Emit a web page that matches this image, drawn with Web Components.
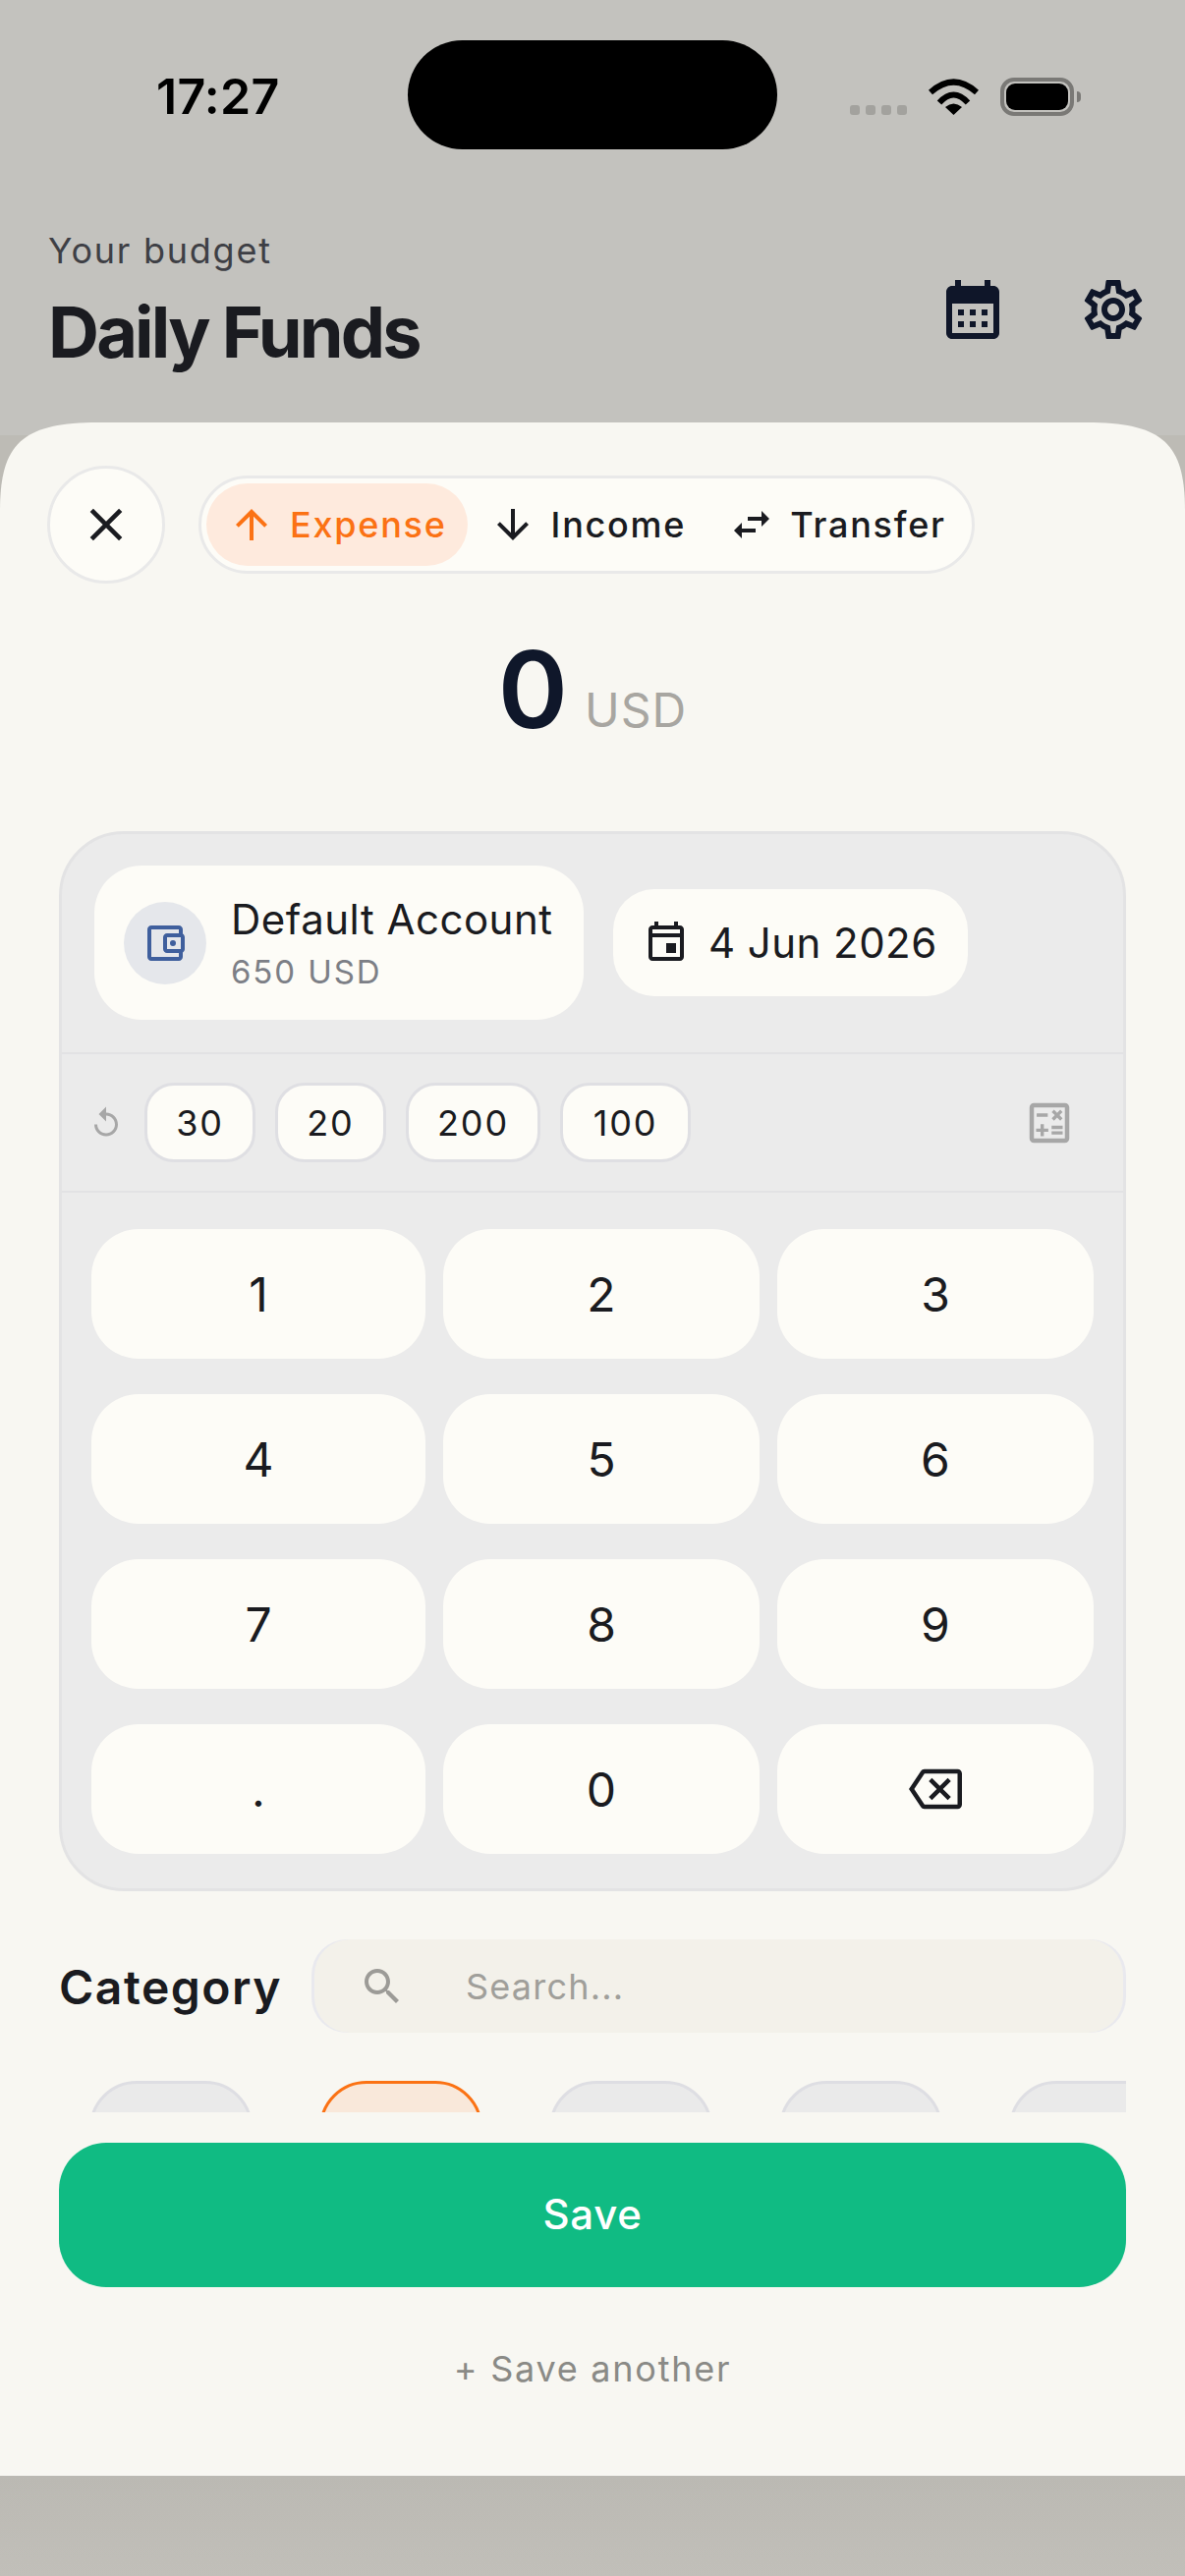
<!DOCTYPE html>
<html lang="en"><head><meta charset="utf-8"><title>Daily Funds</title>
<style>
html,body{margin:0;padding:0}
body{width:1206px;height:2622px;overflow:hidden;position:relative;font-family:Inter,"Liberation Sans",sans-serif;color:#1A1B20;
background:linear-gradient(to bottom,#BDBBB5 0,#BDBBB5 2520px,#BBB9B3 2520px,#C1BFB9 2622px)}
</style></head><body>
<app-top></app-top>
<entry-sheet>
  <sheet-top></sheet-top>
  <amount-display value="0" currency="USD"></amount-display>
  <entry-panel></entry-panel>
  <category-row></category-row>
  <category-strip></category-strip>
  <save-actions></save-actions>
</entry-sheet>
<script>
const P={
 up:'M4 12l1.41 1.41L11 7.83V20h2V7.83l5.58 5.59L20 12l-8-8-8 8z',
 down:'M20 12l-1.41-1.41L13 16.17V4h-2v12.17l-5.58-5.59L4 12l8 8 8-8z',
 swap:'M6.99 11L3 15l3.99 4v-3H14v-2H6.99v-3zM21 9l-3.99-4v3H10v2h7.01v3L21 9z',
 close:'M19 6.41L17.59 5 12 10.59 6.41 5 5 6.41 10.59 12 5 17.59 6.41 19 12 13.41 17.59 19 19 17.59 13.41 12z',
 event:'M6 1h2v2h8V1h2v2h1c1.1 0 2 .9 2 2v14c0 1.1-.9 2-2 2H5c-1.1 0-2-.9-2-2V5c0-1.100.9-2 2-2h1zM5 5v2h14V5zM5 9v10h14V9zM12 12h5v5h-5z',
 month:'M19 4h-1V2h-2v2H8V2H6v2H5c-1.1 0-2 .9-2 2v14c0 1.1.9 2 2 2h14c1.1 0 2-.9 2-2V6c0-1.1-.9-2-2-2zm0 16H5V10h14v10zM9 14H7v-2h2v2zm4 0h-2v-2h2v2zm4 0h-2v-2h2v2zm-8 4H7v-2h2v2zm4 0h-2v-2h2v2zm4 0h-2v-2h2v2z',
 gear:'M19.43 12.98c.04-.32.07-.64.07-.98 0-.34-.03-.66-.07-.98l2.11-1.65c.19-.15.24-.42.12-.64l-2-3.46c-.09-.16-.26-.25-.44-.25-.06 0-.12.01-.17.03l-2.49 1c-.52-.4-1.08-.73-1.69-.98l-.38-2.65C14.46 2.18 14.25 2 14 2h-4c-.25 0-.46.18-.49.42l-.38 2.65c-.61.25-1.17.59-1.69.98l-2.49-1c-.06-.02-.12-.03-.18-.03-.17 0-.34.09-.43.25l-2 3.46c-.13.22-.07.49.12.64l2.11 1.65c-.04.32-.07.65-.07.98 0 .33.03.66.07.98l-2.11 1.65c-.19.15-.24.42-.12.64l2 3.46c.09.16.26.25.44.25.06 0 .12-.01.17-.03l2.49-1c.52.4 1.08.73 1.69.98l.38 2.65c.03.24.24.42.49.42h4c.25 0 .46-.18.49-.42l.38-2.65c.61-.25 1.17-.59 1.69-.98l2.49 1c.06.02.12.03.18.03.17 0 .34-.09.43-.25l2-3.46c.12-.22.07-.49-.12-.64l-2.11-1.65zm-1.98-1.71c.04.31.05.52.05.73 0 .21-.02.43-.05.73l-.14 1.13.89.7 1.08.84-.7 1.21-1.27-.51-1.04-.42-.9.68c-.43.32-.84.56-1.25.73l-1.06.43-.16 1.13-.2 1.35h-1.4l-.19-1.35-.16-1.13-1.06-.43c-.43-.18-.83-.41-1.23-.71l-.91-.7-1.06.43-1.27.51-.7-1.21 1.08-.84.89-.7-.14-1.13c-.03-.31-.05-.54-.05-.74s.02-.43.05-.73l.14-1.13-.89-.7-1.08-.84.7-1.21 1.27.51 1.04.42.9-.68c.43-.32.84-.56 1.25-.73l1.06-.43.16-1.13.2-1.35h1.39l.19 1.35.16 1.13 1.06.43c.43.18.83.41 1.23.71l.91.7 1.06-.43 1.27-.51.7 1.21-1.07.85-.89.7.14 1.13zM12 8c-2.21 0-4 1.79-4 4s1.79 4 4 4 4-1.79 4-4-1.79-4-4-4zm0 6c-1.1 0-2-.9-2-2s.9-2 2-2 2 .9 2 2-.9 2-2 2z',
 wallet:'M21 7.28V5c0-1.1-.9-2-2-2H5c-1.11 0-2 .9-2 2v14c0 1.1.89 2 2 2h14c1.1 0 2-.9 2-2v-2.28c.59-.35 1-.98 1-1.72V9c0-.74-.41-1.37-1-1.72zM20 9v6h-7V9h7zM5 19V5h14v2h-6c-1.1 0-2 .9-2 2v6c0 1.1.9 2 2 2h6v2H5z M16 10.5a1.5 1.5 0 1 0 0 3a1.5 1.5 0 1 0 0-3z',
 replay:'M12 5V1L7 6l5 5V7c3.31 0 6 2.69 6 6s-2.69 6-6 6-6-2.69-6-6H4c0 4.42 3.58 8 8 8s8-3.58 8-8-3.58-8-8-8z',
 calc:'M19 3H5c-1.1 0-2 .9-2 2v14c0 1.1.9 2 2 2h14c1.1 0 2-.9 2-2V5c0-1.1-.9-2-2-2zm0 16H5V5h14v14zM6.25 7.72h5v1.5h-5zM13 15.75h5v1.5h-5zM13 13.25h5v1.5h-5zM8 18h1.5v-2h2v-1.5h-2v-2H8v2H6V16h2zM14.09 10.95l1.41-1.41 1.41 1.41 1.06-1.06-1.41-1.42 1.41-1.41L16.91 6 15.5 7.41 14.09 6l-1.06 1.06 1.41 1.41-1.41 1.42z',
 back:'M22 3H7c-.69 0-1.23.35-1.59.88L0 12l5.41 8.11c.36.53.9.89 1.59.89h15c1.1 0 2-.9 2-2V5c0-1.1-.9-2-2-2zm0 16H7.07L2.4 12l4.66-7H22v14zm-11.59-2L14 13.41 17.59 17 19 15.59 15.41 12 19 8.41 17.59 7 14 10.59 10.41 7 9 8.41 12.59 12 9 15.59z',
 search:'M15.5 14h-.79l-.28-.27C15.41 12.59 16 11.11 16 9.5 16 5.91 13.09 3 9.5 3S3 5.91 3 9.5 5.91 16 9.5 16c1.61 0 3.09-.59 4.23-1.57l.27.28v.79l5 4.99L20.49 19l-4.99-5zm-6 0C7.01 14 5 11.99 5 9.5S7.01 5 9.5 5 14 7.01 14 9.5 11.99 14 9.5 14z'
};
class Base extends HTMLElement{
  constructor(){super();this.attachShadow({mode:'open'})}
  connectedCallback(){if(!this._d){this._d=1;this.shadowRoot.innerHTML=this.render()}}
}
const def=(n,r)=>customElements.define(n,class extends Base{render(){return r.call(this)}});
def('ui-icon',function(){const s=this.getAttribute('size')||48,c=this.getAttribute('color')||'currentColor';
 return `<style>:host{display:block;flex:none;width:${s}px;height:${s}px}svg{display:block;width:100%;height:100%}</style><svg viewBox="0 0 24 24"><path fill="${c}" fill-rule="evenodd" d="${P[this.getAttribute('name')]}"/></svg>`});
def('status-bar',()=>`<style>
:host{display:flex;height:152px;box-sizing:border-box;padding-top:41px;font-family:Inter,sans-serif}
.l{width:415px;box-sizing:border-box;padding:27px 0 0 159px;font-size:50px;font-weight:600;line-height:60px;color:#000;letter-spacing:.3px}
.i{width:376px;height:111px;border-radius:56px;background:#000}
.r{display:flex;align-items:flex-end;height:76px;padding-left:74px}
.d{display:flex;gap:6px}.d b{width:10px;height:10px;border-radius:3px;background:#A3A29E;display:block}
svg.w{display:block;margin-left:22px;width:51px;height:37px}
.b{margin-left:22px;width:75px;height:39px;margin-bottom:-1px;box-sizing:border-box;border:4px solid #7A7976;border-radius:14px;padding:2px;position:relative}
.b i{display:block;height:100%;background:#000;border-radius:9px}
.b u{position:absolute;right:-11px;top:10px;width:4px;height:11px;border-radius:0 4px 4px 0;background:#7A7976}
</style><div class="l">17:27</div><div class="i"></div><div class="r"><div class="d"><b></b><b></b><b></b><b></b></div>
<svg class="w" viewBox="0 0 51 37"><path d="M2 14Q25.5-7 49 14M11 24.500Q25.500 8.500 40 24.500" fill="none" stroke="#000" stroke-width="6"/><path d="M25.500 37L17 29Q25.500 22 34 29Z" fill="#000"/></svg>
<div class="b"><i></i><u></u></div></div>`);
def('app-top',()=>`<style>
:host{display:block;height:443px;box-sizing:border-box;background:#C3C2BE}
.h{display:flex;justify-content:space-between;padding:81px 37px 0 49px}
.s{font-size:36px;line-height:44px;color:#3E3F45;letter-spacing:1.75px}
.t{font-size:72px;font-weight:700;line-height:86px;color:#1A1B20;letter-spacing:-2.85px;margin-top:18px}
.a{display:flex;gap:71px;padding-top:46px}
</style><status-bar></status-bar><div class="h"><div><div class="s">Your budget</div><div class="t">Daily Funds</div></div>
<div class="a"><ui-icon name="month" size="72" color="#0F1629"></ui-icon><ui-icon name="gear" size="72" color="#0F1629"></ui-icon></div></div>`);
def('entry-sheet',()=>`<style>
:host{display:block;position:absolute;left:0;top:430px;width:1206px;height:2090px;box-sizing:border-box;background:#F8F7F2;clip-path:path('M0 90C0 22 22 0 100 0H1106C1184 0 1206 22 1206 90V2090H0Z');padding-top:44px;font-family:Inter,sans-serif}
</style><slot></slot>`);
def('seg-tab',function(){const a=this.hasAttribute('active');return `<style>
:host{display:flex;align-items:center;gap:15px;height:84px;padding:0 21px 0 22px;border-radius:42px;font-size:36px;font-weight:500;letter-spacing:1.75px;color:${a?'#FB7214':'#1A1B20'};background:${a?'#FEEADD':'transparent'}}
</style><ui-icon name="${this.getAttribute('icon')}" size="48"></ui-icon><slot></slot>`});
def('sheet-top',()=>`<style>
:host{display:flex;align-items:center;gap:34px;padding-left:48px}
.c{width:120px;height:120px;box-sizing:border-box;border:3px solid #E9E9E9;border-radius:50%;background:#FDFCF7;display:flex;align-items:center;justify-content:center;color:#1A1B20}
.s{display:flex;height:100px;box-sizing:border-box;align-items:center;border:3px solid #E9E9E9;border-radius:50px;background:#FDFCF7;padding:0 5px}
</style><div class="c"><ui-icon name="close" size="56"></ui-icon></div>
<div class="s"><seg-tab icon="up" active>Expense</seg-tab><seg-tab icon="down">Income</seg-tab><seg-tab icon="swap">Transfer</seg-tab></div>`);
def('amount-display',function(){return `<style>
:host{display:flex;justify-content:center;align-items:baseline;gap:17px;margin:54px 0 90px;height:108px;line-height:108px}
.v{font-size:108px;font-weight:600;color:#0F172A}.c{font-size:48px;color:#A8A6A1;letter-spacing:1px;position:relative;top:-1px}
</style><span class="v">${this.getAttribute('value')}</span><span class="c">${this.getAttribute('currency')}</span>`});
def('account-card',()=>`<style>
:host{display:flex;align-items:center;gap:25px;width:498px;height:157px;box-sizing:border-box;padding-left:30px;border-radius:48px;background:#FDFCF7}
.i{width:84px;height:84px;border-radius:50%;background:#E5E7EB;display:flex;align-items:center;justify-content:center}
.n{font-size:42px;line-height:50px;letter-spacing:.5px;color:#1A1B20}
.b{font-size:33px;line-height:40px;letter-spacing:1.9px;color:#7C7F86;margin-top:8px}
</style><div class="i"><ui-icon name="wallet" size="48" color="#3F5F9D"></ui-icon></div><div><div class="n">Default Account</div><div class="b">650 USD</div></div>`);
def('date-pill',()=>`<style>
:host{display:flex;align-items:center;gap:19px;width:361px;height:109px;box-sizing:border-box;padding-left:30px;border-radius:42px;background:#FDFCF7;font-size:42px;letter-spacing:.45px;color:#1A1B20}
</style><ui-icon name="event" size="48"></ui-icon><span>4 Jun 2026</span>`);
def('quick-chip',function(){const w=this.getAttribute('w');return `<style>
:host{display:flex;align-items:center;justify-content:center;width:${w}px;height:81px;box-sizing:border-box;border:3px solid #DFDFE3;border-radius:30px;background:#FDFCF7;font-size:36px;letter-spacing:1.8px;color:#1A1B20}
</style><slot></slot>`});
def('key-btn',()=>`<style>
:host{display:flex;align-items:center;justify-content:center;border-radius:48px;background:#FDFCF7;font-size:48px;color:#1A1B20}
</style><slot></slot>`);
def('entry-panel',()=>`<style>
:host{display:block;margin:0 60px;height:1079px;box-sizing:border-box;border:3px solid #E3E3E4;border-radius:66px;background:#EBEBEB}
.a{display:flex;align-items:center;gap:30px;height:224px;box-sizing:border-box;padding:33px 33px 34px;border-bottom:2px solid #E2E2E4}
.q{display:flex;align-items:center;gap:20px;height:141px;box-sizing:border-box;padding:0 48px 0 27px;border-bottom:2px solid #E2E2E4}
.q ui-icon:first-child{margin-right:1px}
.q ui-icon:last-child{margin-left:auto}
.k{display:grid;grid-template-columns:340px 322px 322px;grid-auto-rows:132px;column-gap:18px;row-gap:36px;padding:37px 30px 0}
</style><div class="a"><account-card></account-card><date-pill></date-pill></div>
<div class="q"><ui-icon name="replay" size="36" color="#A7A7A7"></ui-icon><quick-chip w="113">30</quick-chip><quick-chip w="113">20</quick-chip><quick-chip w="137">200</quick-chip><quick-chip w="133">100</quick-chip><ui-icon name="calc" size="54" color="#A7A7A7"></ui-icon></div>
<div class="k"><key-btn>1</key-btn><key-btn>2</key-btn><key-btn>3</key-btn><key-btn>4</key-btn><key-btn>5</key-btn><key-btn>6</key-btn><key-btn>7</key-btn><key-btn>8</key-btn><key-btn>9</key-btn><key-btn>.</key-btn><key-btn>0</key-btn><key-btn><ui-icon name="back" size="54"></ui-icon></key-btn></div>`);
def('category-row',()=>`<style>
:host{display:flex;align-items:center;gap:32px;margin:49px 60px 0;height:95px}
.t{flex:none;width:225px;font-size:48px;font-weight:600;letter-spacing:1.5px;color:#1A1B20;position:relative;top:1px}
.s{flex:1;height:95px;border-radius:36px;background:#E9E9EE;overflow:hidden;display:flex}
.i{flex:1;margin:0 3px;border-radius:36px;background:#F3F1EA;display:flex;align-items:center;padding-left:45px;gap:61px;font-size:36px;letter-spacing:1.2px;color:#A09F9A}
</style><div class="t">Category</div><div class="s"><div class="i"><ui-icon name="search" size="48" color="#9C9B97"></ui-icon><span>Search...</span></div></div>`);
def('category-strip',()=>`<style>
:host{display:flex;gap:68px;margin:49px 60px 0;height:32px;overflow:hidden;padding-left:31px}
b{display:block;flex:none;width:166px;height:160px;box-sizing:border-box;border:3px solid #DEDEE3;border-radius:48px;background:#EAEAEA}
b.a{border-color:#FB7214;background:#F9E8DA}
</style><b></b><b class="a"></b><b></b><b></b><b></b>`);
def('save-actions',()=>`<style>
:host{display:block;margin:31px 60px 0}
.s{display:flex;align-items:center;justify-content:center;height:147px;border-radius:48px;background:#10BB83;color:#fff;font-size:42px;font-weight:500;letter-spacing:.7px;padding-bottom:2px;box-sizing:border-box}
.a{text-align:center;margin-top:59px;font-size:36px;line-height:48px;letter-spacing:1.75px;color:#8A8A86}
</style><div class="s">Save</div><div class="a">+ Save another</div>`);
</script>
</body></html>
